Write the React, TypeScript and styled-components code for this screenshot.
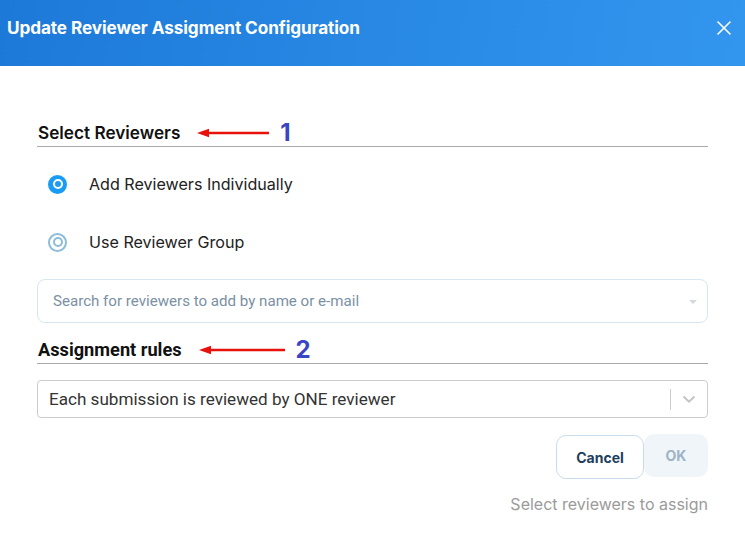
import styled, { createGlobalStyle } from "styled-components";

const GlobalStyle = createGlobalStyle`
  html, body {
    margin: 0;
    padding: 0;
    background: #ffffff;
  }
  body {
    font-family: Inter, "Noto Sans", sans-serif;
  }
`;

export default function App() {
  return (
    <>
      <GlobalStyle />
      <Modal>
        <Header>
          <Title>Update Reviewer Assigment Configuration</Title>
          <CloseButton aria-label="close">
            <svg width="14" height="14" viewBox="0 0 14 14">
              <path d="M1 1L13 13M13 1L1 13" stroke="#fff" strokeWidth="1.6" strokeLinecap="round" />
            </svg>
          </CloseButton>
        </Header>
        <Body>
          <SectionHead>
            <SectionTitle>Select Reviewers</SectionTitle>
            <Arrow width={72} />
            <Marker>1</Marker>
          </SectionHead>

          <RadioRow>
            <Radio checked />
            <RadioLabel>Add Reviewers Individually</RadioLabel>
          </RadioRow>
          <RadioRow>
            <Radio />
            <RadioLabel>Use Reviewer Group</RadioLabel>
          </RadioRow>

          <SearchBox>
            <Placeholder>Search for reviewers to add by name or e-mail</Placeholder>
            <Caret />
          </SearchBox>

          <SectionHead tight>
            <SectionTitle condensed>Assignment rules</SectionTitle>
            <Arrow width={86} />
            <Marker>2</Marker>
          </SectionHead>

          <SelectBox>
            <SelectValue>Each submission is reviewed by ONE reviewer</SelectValue>
            <SelectIndicator>
              <Separator />
              <svg width="20" height="20" viewBox="0 0 20 20">
                <path
                  d="M4.5 7.6l5.5 5.1 5.5-5.1"
                  fill="none"
                  stroke="#c4c4c4"
                  strokeWidth="2"
                />
              </svg>
            </SelectIndicator>
          </SelectBox>

          <Actions>
            <CancelButton>Cancel</CancelButton>
            <OkButton disabled>OK</OkButton>
          </Actions>
          <Hint>Select reviewers to assign</Hint>
        </Body>
      </Modal>
    </>
  );
}

function Arrow({ width }: { width: number }) {
  return (
    <ArrowSvg width={width} height="10" viewBox={`0 0 ${width} 10`}>
      <path d={`M${width} 5H10`} stroke="#e8120c" strokeWidth="2.4" />
      <path d="M0 5L12 0.8V9.2Z" fill="#e8120c" />
    </ArrowSvg>
  );
}

const Modal = styled.div`
  width: 745px;
  height: 547px;
  background: #fff;
  display: flex;
  flex-direction: column;
`;

const Header = styled.div`
  height: 66px;
  box-sizing: border-box;
  padding: 17px 10px 0 7px;
  display: flex;
  align-items: flex-start;
  justify-content: space-between;
  background: linear-gradient(100deg, #1d79d8 0%, #2a8be6 60%, #3396ee 100%);
`;

const Title = styled.h1`
  margin: 0;
  font-family: Inter, sans-serif;
  font-size: 17.2px;
  font-weight: 700;
  line-height: 22px;
  color: #fff;
  letter-spacing: -0.1px;
`;

const CloseButton = styled.button`
  border: none;
  background: transparent;
  padding: 4px;
  display: flex;
  cursor: pointer;
`;

const Body = styled.div`
  padding: 56px 37px 0 37px;
  display: flex;
  flex-direction: column;
`;

const SectionHead = styled.div<{ tight?: boolean }>`
  display: flex;
  align-items: center;
  height: 22px;
  padding-bottom: 2px;
  border-bottom: 1px solid #a9a9a9;
  margin-bottom: ${(p) => (p.tight ? "16px" : "8px")};
`;

const SectionTitle = styled.h2<{ condensed?: boolean }>`
  margin: 0 0 0 1px;
  font-family: ${(p) => (p.condensed ? "Roboto, sans-serif" : "Inter, sans-serif")};
  font-size: ${(p) => (p.condensed ? "18.2px" : "17.2px")};
  font-weight: ${(p) => (p.condensed ? 700 : 600)};
  color: #111;
  line-height: 22px;
`;

const ArrowSvg = styled.svg`
  margin-left: 17px;
  display: block;
`;

const Marker = styled.span`
  margin-left: 11px;
  font-family: Inter, sans-serif;
  font-size: 24px;
  font-weight: 700;
  color: #3a45c4;
  line-height: 24px;
`;

const RadioRow = styled.label`
  display: flex;
  align-items: center;
  height: 58px;
  padding-left: 11px;
  cursor: pointer;
`;

const Radio = styled.span<{ checked?: boolean }>`
  width: 19px;
  height: 19px;
  box-sizing: border-box;
  border-radius: 50%;
  border: 2px solid ${(p) => (p.checked ? "#1a9cf4" : "#8cbcd8")};
  background: ${(p) => (p.checked ? "#1a9cf4" : "#fff")};
  display: flex;
  align-items: center;
  justify-content: center;
  flex-shrink: 0;

  &::after {
    content: "";
    width: 10px;
    height: 10px;
    box-sizing: border-box;
    border-radius: 50%;
    border: 2px solid ${(p) => (p.checked ? "#fff" : "#8cbcd8")};
    background: ${(p) => (p.checked ? "#1a9cf4" : "#fff")};
  }
`;

const RadioLabel = styled.span`
  margin-left: 22px;
  font-family: Inter, sans-serif;
  font-size: 16.1px;
  color: #222;
`;

const SearchBox = styled.div`
  margin-top: 8px;
  height: 44px;
  box-sizing: border-box;
  border: 1px solid #d8e6f1;
  border-radius: 8px;
  display: flex;
  align-items: center;
  justify-content: space-between;
  padding: 0 10px 0 15px;
  margin-bottom: 16px;
`;

const Placeholder = styled.span`
  font-family: Roboto, sans-serif;
  font-size: 15.1px;
  color: #7b90a4;
`;

const Caret = styled.span`
  width: 0;
  height: 0;
  border-left: 4px solid transparent;
  border-right: 4px solid transparent;
  border-top: 4px solid #d2d8de;
  margin-top: 2px;
`;

const SelectBox = styled.div`
  height: 38px;
  box-sizing: border-box;
  border: 1px solid #cccccc;
  border-radius: 4px;
  display: flex;
  align-items: center;
  justify-content: space-between;
  padding-left: 11px;
`;

const SelectValue = styled.span`
  font-family: Roboto, sans-serif;
  font-size: 17.1px;
  color: #333;
`;

const SelectIndicator = styled.div`
  display: flex;
  align-items: center;
  height: 100%;
  padding-right: 8px;
  gap: 8px;
`;

const Separator = styled.span`
  width: 1px;
  height: 21px;
  background: #cccccc;
`;

const Actions = styled.div`
  margin-top: 17px;
  display: flex;
  justify-content: flex-end;
  align-items: flex-start;
`;

const CancelButton = styled.button`
  width: 88px;
  height: 44px;
  border: 1px solid #c9dcee;
  border-radius: 10px;
  background: #fff;
  font-family: Inter, sans-serif;
  font-size: 14px;
  font-weight: 700;
  color: #1d3e5e;
  cursor: pointer;
`;

const OkButton = styled.button`
  width: 64px;
  height: 43px;
  margin-top: -1px;
  border: none;
  border-radius: 10px;
  background: #f0f5fa;
  font-family: Inter, sans-serif;
  font-size: 14px;
  font-weight: 700;
  color: #9fb3c6;
`;

const Hint = styled.div`
  margin-top: 15px;
  text-align: right;
  font-family: Inter, sans-serif;
  font-size: 16px;
  color: #9b9b9b;
`;
